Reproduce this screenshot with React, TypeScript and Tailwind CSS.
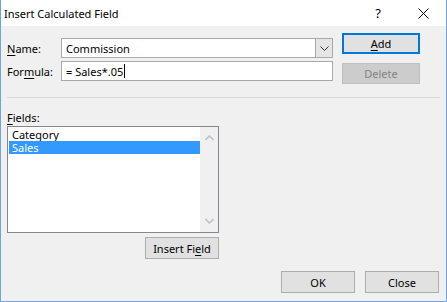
const font = { fontFamily: '"Noto Sans", "Open Sans", sans-serif' };

function Btn({ children, className = "" }: { children: React.ReactNode; className?: string }) {
  return (
    <button
      type="button"
      className={`flex h-[22px] w-[74px] items-center justify-center border border-[#adadad] bg-[#e1e1e1] text-[11px] text-black ${className}`}
    >
      {children}
    </button>
  );
}

function Chevron({ up }: { up?: boolean }) {
  return (
    <svg width="9" height="6" viewBox="0 0 9 6" className="block">
      <path
        d={up ? "M0.5 5 L4.5 1 L8.5 5" : "M0.5 1 L4.5 5 L8.5 1"}
        fill="none"
        stroke="#c2c2c2"
        strokeWidth="1.6"
      />
    </svg>
  );
}

export default function App() {
  return (
    <div
      className="flex h-[302px] w-[447px] flex-col border-x border-b border-[#6fa5dc] bg-[#f0f0f0] text-[11px] leading-[13px] text-black"
      style={font}
    >
      {/* title bar */}
      <div className="flex h-[26px] items-center bg-white pl-[3px]">
        <span className="text-[11px]">Insert Calculated Field</span>
        <span className="ml-auto mr-[37px] text-[13px]">?</span>
        <svg width="11" height="11" viewBox="0 0 11 11" className="mr-[17px]">
          <path d="M0.5 0.5 L10.5 10.5 M10.5 0.5 L0.5 10.5" stroke="#000" strokeWidth="1" />
        </svg>
      </div>

      <div className="flex flex-col px-[6px]">
        <div className="flex">
          <div className="mt-[12px] flex w-[326px] flex-col gap-[3px]">
            <div className="flex h-[20px] items-center">
              <span className="w-[54px]">
                <span className="underline underline-offset-2">N</span>ame:
              </span>
              <div className="flex h-[20px] flex-1 items-center border border-[#a9a9a9] bg-white">
                <span className="flex-1 pl-[4px]">Commission</span>
                <div className="flex h-full w-[17px] items-center justify-center border-l border-[#a9a9a9] bg-[#e5e5e5]">
                  <svg width="9" height="5" viewBox="0 0 9 5">
                    <path d="M0.5 0.5 L4.5 4.5 L8.5 0.5" fill="none" stroke="#333" strokeWidth="1" />
                  </svg>
                </div>
              </div>
            </div>
            <div className="flex h-[20px] items-center">
              <span className="w-[54px]">
                For<span className="underline underline-offset-2">m</span>ula:
              </span>
              <div className="flex h-[20px] flex-1 items-center border border-[#a9a9a9] bg-white pl-[4px]">
                <span>= Sales*.05</span>
                <span className="ml-[1px] h-[14px] w-px bg-black" />
              </div>
            </div>
          </div>
          <div className="ml-[9px] mt-[7px] flex flex-col gap-[9px]">
            <button
              type="button"
              className="flex h-[21px] w-[78px] items-center justify-center border-2 border-[#0078d7] bg-[#e1e1e1] text-[11px]"
            >
              <span className="underline underline-offset-2">A</span>dd
            </button>
            <button
              type="button"
              className="flex h-[21px] w-[78px] items-center justify-center border border-[#bfbfbf] bg-[#cccccc] text-[11px] text-[#838383]"
            >
              Delete
            </button>
          </div>
        </div>

        <div className="mt-[13px] h-px w-[433px] bg-[#d9d9d9]" />

        <div className="mt-[13px]">
          <span className="underline underline-offset-2">F</span>ields:
        </div>

        <div className="mt-[2px] flex h-[107px] w-[212px] border border-[#828790] bg-white">
          <div className="flex flex-1 flex-col pl-[1px] pt-[1px]">
            <div className="flex h-[13px] items-center pl-[3px]">Category</div>
            <div className="flex h-[13px] items-center bg-[#3399ff] pl-[3px] text-white">Sales</div>
          </div>
          <div className="flex w-[18px] flex-col items-center justify-between bg-[#f0f0f0] py-[8px]">
            <Chevron up />
            <Chevron />
          </div>
        </div>

        <div className="mt-[4px] flex w-[212px] justify-end">
          <Btn>
            Insert Fi<span className="underline underline-offset-2">e</span>ld
          </Btn>
        </div>

        <div className="mt-[12px] flex justify-end gap-[10px] pr-[1px]">
          <Btn>OK</Btn>
          <Btn>Close</Btn>
        </div>
      </div>
    </div>
  );
}
